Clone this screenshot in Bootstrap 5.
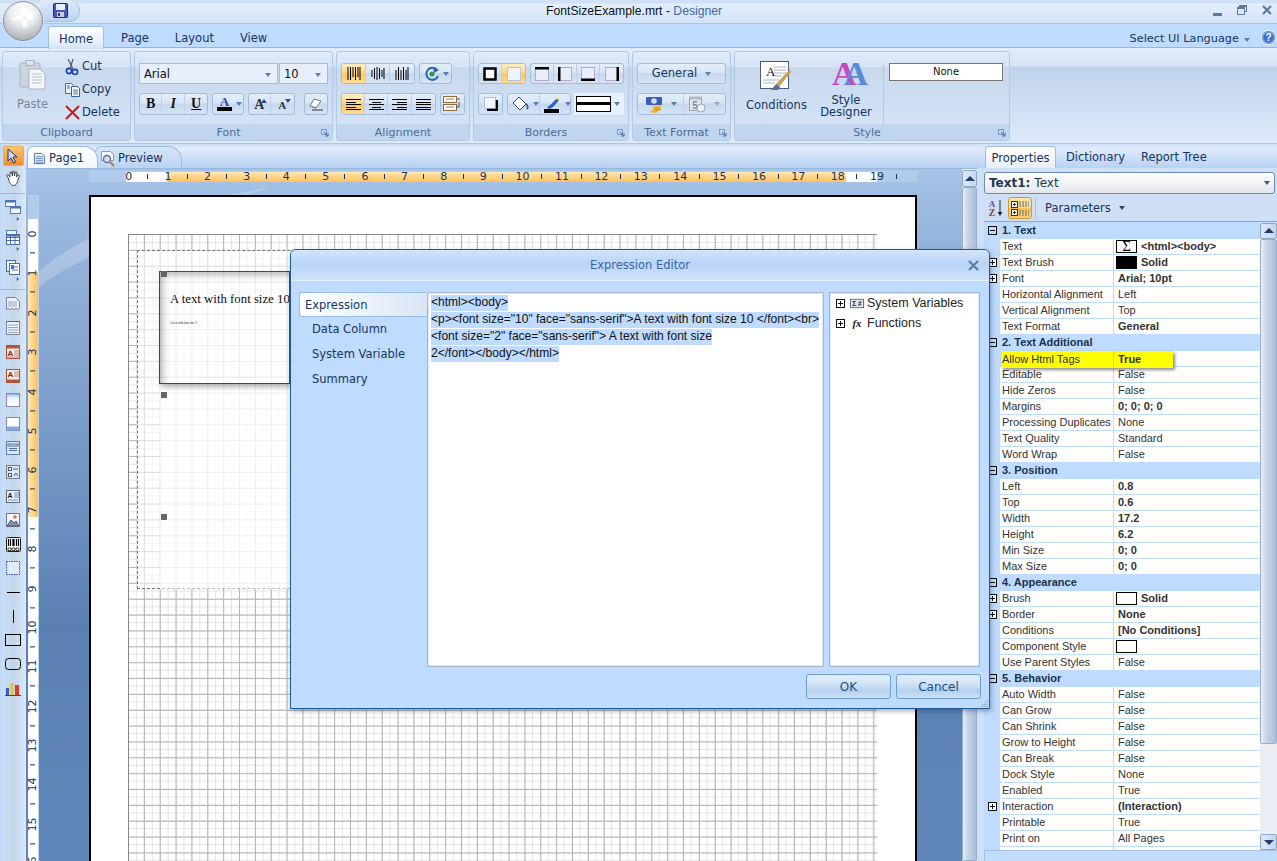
<!DOCTYPE html>
<html lang="en"><head><meta charset="utf-8"><title>FontSizeExample.mrt - Designer</title>
<link href="https://cdn.jsdelivr.net/npm/bootstrap@5.3.0/dist/css/bootstrap.min.css" rel="stylesheet">
<style>
html,body{margin:0;height:861px;width:1277px;overflow:hidden;background:#bfdbff}
body{position:relative;font:11px/1.2 "DejaVu Sans",sans-serif;color:#15365e}
svg{display:block;flex:none}
.tbar{height:24px;background:linear-gradient(#cfe0f7 0,#cfe0f7 3px,#e3eefc 4px,#d3e3f8 23px);border-bottom:1px solid #a5c6ea;align-items:flex-start}
.qat{margin-left:40px;width:40px;height:22px;background:linear-gradient(#dfeafa,#bcd3f0);border:1px solid #a9c2e2;border-left:0;border-top:0;border-radius:0 12px 12px 0;padding:3px 0 0 13px}
.ttl{position:relative;margin-left:466px;font:12.2px/22px "Liberation Sans",sans-serif;color:#111;white-space:pre}
.ttl b{font-weight:400;color:#3d69a8}
.wc{margin-left:auto;gap:15px;padding:5px 5px 0 0;align-items:flex-start}
.logo{position:absolute;left:3px;top:1px;width:40px;height:40px;border-radius:50%;border:1px solid #8b9199;background:radial-gradient(circle at 50% 25%,#fff 0,#e8ebef 40%,#a9aeb5 85%,#d6d9dd 100%);box-shadow:0 0 0 1px #d8e3f1;z-index:5}
.rtabs{height:24px;background:#bfdbff;border-bottom:1px solid #92b5df;padding:2px 0 0 48px;font-size:11.5px}
.rtabs .nav-link{padding:0;line-height:20px;color:#15365e;border:0}
.rtabs .on{width:56px;height:23px;text-align:center;background:linear-gradient(#fff,#e6effb 70%,#d3e2f5);border:1px solid #9bc3e6;border-bottom:0;border-radius:4px 4px 0 0;padding-top:2px;margin-right:17px;z-index:1}
.rtabs .t{margin-right:26px;padding-top:2px}
.rlang{margin-left:auto;padding:4px 1px 0 0;font-size:11.3px;gap:5px}
.rlang svg{margin-left:6px}
.rb{height:96px;background:linear-gradient(#e2ecfa,#d6e4f6 18px,#bfd3ec 19px,#d4e2f5 70px,#dce9f9);border-bottom:1px solid #a5c9ef;padding:3px 2px 2px;gap:3px}
.grp{border:1px solid #b3c9e4;border-radius:3px;background:linear-gradient(#e0eaf8,#d6e4f6 14px,#c8d9ee 16px,#d3e2f5 72px);display:flex;flex-direction:column;position:relative}
.gc{height:73px;padding:11px 4px 0;display:flex;flex-direction:column;gap:9px}
.gf{height:16px;background:#c1d6ee;text-align:center;line-height:17px;color:#4d6c95;font-size:11px;border-radius:0 0 3px 3px;margin-top:auto}
.gf.pr10{padding-right:10px}
.grip{position:absolute;right:3px;bottom:3px}
.rw{display:flex;gap:4px;height:22px;align-items:stretch}
.bg1{display:flex;border:1px solid #a3bcdb;border-radius:3px;background:linear-gradient(#e4eefb,#d8e5f6 45%,#c6d8ef 50%,#d6e4f6);overflow:hidden}
.bi{width:24px;display:flex;align-items:center;justify-content:center;border-right:1px solid #bdd0e8;font-family:"Liberation Serif",serif;color:#111;position:relative}
.bi:last-child{border-right:0}
.bi.on{background:linear-gradient(#ffeec2,#ffd98a 45%,#ffc564 55%,#ffdc94)}
.arr{width:0;height:0;border:3px solid transparent;border-top:4px solid #5a7dae;border-bottom:0;flex:none}
.cmb{background:#e6effb;border:1px solid #a3bcdb;display:flex;align-items:center;padding:2px 6px 0 4px;justify-content:space-between;font-size:11.5px;color:#111}
.sm{display:flex;align-items:center;gap:2px;height:23px;font-size:11.5px;color:#15365e}
.bt{position:absolute;text-align:center;line-height:12px;font-size:11.5px}
.ltb{width:26px;background:linear-gradient(90deg,#bcdafe 0,#c9dcf2 3px,#c2d6ec 14px,#dae7f6 25px);align-items:center;padding-top:2px}
.li{height:24px;display:flex;align-items:center;justify-content:center;flex:none}
.sep{height:1px;width:24px;background:#9fbcdc;margin:0;flex:none}
.doc{width:951px;background:linear-gradient(#c4d8f1 0,#a9c4e8 26px,#9dbae0 60px,#5a80b3 480px,#6087bb 100%);position:relative}
.dtabs{height:25px;padding:2px 0 0 1px;background:linear-gradient(#c9dcf6,#e3edfb 4px,#b6cff0);border-bottom:1px solid #97b7df;font-size:11.5px;align-items:flex-end}
.dt{height:22px;display:flex;align-items:center;gap:3px;padding:2px 0 0 5px;border-radius:6px 14px 0 0;border:1px solid #a0bde0;border-bottom:0}
.dt.a{width:71px;background:linear-gradient(#fff,#f2f6fc);z-index:1}
.dt.b{width:87px;margin-left:-3px;gap:1px;background:linear-gradient(#d8e6f8,#bcd3f1)}
.rh{margin:2px 0 0 63px;width:828px;height:11px;display:flex;padding-left:19px;border:1px solid #bcd1ec;border-width:1px 1px 0;line-height:10px;font-size:11px;background:linear-gradient(90deg,#b3cbea 36px,#fff 36px 77px,transparent 77px 756px,#fff 756px 787px,#b3cbea 787px),linear-gradient(#ffe8b4,#ffc05a)}
.rh span{width:39.4px;text-align:center;position:relative;flex:none}
.rh span::after{content:"";position:absolute;right:0;top:2px;height:5px;width:1px;background:#15365e}
.dm{margin-top:13px;flex:1;min-height:0;overflow:hidden}
.rv{width:11px;margin-left:2px;flex:none;border-right:1px solid #bcd1ec;padding-top:19px;background:linear-gradient(#b3cbea 24px,#fff 24px 77px,transparent 77px 322px,#fff 322px),linear-gradient(90deg,#ffe8b4,#ffc05a)}
.rv span{display:block;height:39.4px;width:10px;text-align:center;writing-mode:vertical-rl;transform:rotate(180deg);line-height:10px;position:relative}
.rv span::after{content:"";position:absolute;top:0;left:3px;width:5px;height:1px;background:#15365e}
.page{margin-left:50px;width:828px;background:#fff;border:2px solid #000;border-bottom:0;padding:37px 38px 0 37px;position:relative;flex:none;height:720px}
.sheet{position:relative;height:700px;border-left:1px solid #888;border-top:1px solid #888;background-color:#fff;background-image:linear-gradient(#b4b4b4 1px,transparent 1px),linear-gradient(90deg,#b4b4b4 1px,transparent 1px),linear-gradient(#e4e4e4 1px,transparent 1px),linear-gradient(90deg,#e4e4e4 1px,transparent 1px);background-size:15.87px 15.87px,15.87px 15.87px,7.93px 7.93px,7.93px 7.93px;background-position:0 -1px,-1px 0}
.margin{position:absolute;left:8px;top:15px;right:0;height:339px;border:1px dashed #777;border-right:0;background:rgba(255,255,255,.58)}
.comp{position:absolute;left:30px;top:36px;width:131px;height:113px;border:1px solid #e00;background:rgba(255,255,255,.45);box-shadow:2px 3px 5px rgba(0,0,0,.3),inset 7px 7px 7px -4px rgba(0,0,0,.28);font-family:"Liberation Serif",serif;color:#111;padding:20px 0 0 10px;white-space:nowrap;overflow:hidden;font-size:12.8px;line-height:15px}
.comp small{display:block;font-size:3px;line-height:3px;margin-top:15px}
.wash{position:absolute;left:31px;top:150px;right:0;height:204px;background:rgba(255,255,255,.5)}
.hd{position:absolute;left:32px;width:6px;height:6px;background:#666}
.vsb{width:15px;background:linear-gradient(90deg,#f4f7fb,#e6ebf3);flex:none;height:100%}
.sbb{height:17px;background:linear-gradient(90deg,#dfe9f6,#c6d6ea);border:1px solid #8fa7c8;border-radius:2px;display:flex;align-items:center;justify-content:center}
.sbt{background:linear-gradient(90deg,#e8eef7,#c5d3e6 40%,#a9bfd9 100%);border:1px solid #98afcc;border-radius:2px}
.up{width:0;height:0;border:5px solid transparent;border-top:0;border-bottom:5px solid #1f3f68}
.dn{width:0;height:0;border:5px solid transparent;border-bottom:0;border-top:5px solid #1f3f68}
.rp{width:300px;flex:none;background:#cfe0f6;padding-left:7px}
.ptabs{height:24px;padding-top:2px;gap:0;align-items:flex-end;font-size:11.5px;margin-left:-7px;padding-left:8px;background:linear-gradient(#cfe1f9,#dfeafb 5px,#b8d2f3)}
.ptabs .a{width:71px;height:22px;background:linear-gradient(#fff,#e9eff8);border:1px solid #a0bde0;border-bottom:0;border-radius:4px 4px 0 0;text-align:center;line-height:22px;margin-right:10px}
.ptabs span{height:22px;line-height:22px;margin-right:16px}
.pcmb{margin-top:4px;width:291px;height:22px;background:linear-gradient(#fff,#e3e6ea);border:1px solid #6a8bb4;border-radius:3px;padding:1px 4px 0;display:flex;align-items:center;font-size:12px;color:#22374f}
.pcmb b{margin-right:4px}
.ptb{height:27px;gap:5px;align-items:center;padding:2px 0 0 3px}
.pact{width:24px;height:22px;margin-left:-1px;border:1px solid #c79b45;border-radius:3px;background:linear-gradient(#ffe6a4,#ffd880 48%,#ffc250 52%,#ffcf72);display:flex;align-items:center;justify-content:center}
.pg{border-top:1px solid #a2a2a2;height:630px;overflow:hidden;background:#bfdbff;position:relative;padding-top:1px;display:flex}
.pgl{width:276px;flex:none;font:11px/15px "Liberation Sans",sans-serif;color:#333}
.ph{height:16px;display:flex;align-items:center;font-weight:700;color:#20324a;padding-left:0}
.ph span{margin-left:2px}
.pr{height:16px;display:flex}
.pm{width:16px;flex:none;display:flex;align-items:center;justify-content:center;padding-left:0}
.pl{width:114px;background:#fff;padding-left:2px;border-right:1px solid #bfdbff;border-bottom:1px solid #bfdbff;flex:none;white-space:nowrap}
.pv{width:146px;background:#fff;padding-left:4px;border-bottom:1px solid #bfdbff;flex:none;white-space:nowrap;overflow:hidden;display:flex;align-items:center;gap:4px}
.hl{display:flex;width:173px;height:17px;margin:0 0 -1px 1px;background:#ff0;box-shadow:2px 2px 3px rgba(0,0,0,.45);position:relative;z-index:2;line-height:16px;color:#333}
.sw{width:21px;height:13px;border:1px solid #000;flex:none;display:flex;align-items:center;justify-content:center;font:15px/1 "Liberation Serif",serif;color:#000;margin-left:-2px}
.psb{width:17px;display:flex;flex-direction:column;background:#ebeff5;flex:none}
.pend{margin-top:0;height:11px;background:#c2dcfc;border-left:1px solid #a7c0dd;border-top:1px solid #a7c0dd}
.dlg{position:absolute;left:290px;top:249px;width:700px;height:460px;border:1px solid #1f5c98;border-radius:6px 6px 0 0;background:#bfdbff;box-shadow:1px 2px 5px rgba(20,40,80,.4);z-index:10;display:flex;flex-direction:column}
.dh{height:31px;background:linear-gradient(#d4e4f9,#b9d5f8 45%,#cfe1f9);border-bottom:1px solid #e5f0fd;text-align:center;font-size:11.5px;line-height:30px;color:#3c64a0;position:relative;flex:none;border-radius:5px 5px 0 0}
.dh svg{position:absolute;right:10px;top:10px}
.dtb{width:136px;padding:0 0 0 8px;flex:none;font-size:11.5px}
.dtb div{height:25px;line-height:24px;padding-left:13px}
.dtb .a{padding-left:5px;border:1px solid #99bfe8;border-right:0;border-radius:3px 0 0 3px;background:linear-gradient(90deg,#fff,#d9e6f6);margin-bottom:0}
.dbd{flex:1;min-height:0;padding-top:11px}
.ed{width:397px;background:#fff;border:1px solid #a6b7c9;box-shadow:inset 0 0 0 1px #dfe9f5;font:12.05px/17px "Liberation Sans",sans-serif;color:#111;padding:1px 3px;white-space:nowrap;border-radius:3px 0 0 0}
.ed span{background:#bfdbff;display:inline-block;height:16px;line-height:15px}
.ed div{height:17px}
.tr{width:151px;margin-left:5px;background:#fff;border:1px solid #a6b7c9;box-shadow:inset 0 0 0 1px #dfe9f5;font:12.5px/20px "Liberation Sans",sans-serif;color:#222}
.tr div{display:flex;align-items:center;height:20px;gap:3px;padding-left:6px}
.df{height:41px;display:flex;justify-content:flex-end;gap:5px;padding:7px 8px 0 0;flex:none;position:relative}
.df>svg{position:absolute;right:1px;bottom:1px}
.dbtn{width:85px;height:25px;padding:0;font:12px/22px "DejaVu Sans",sans-serif;color:#1b4f82;border:1px solid #6f9dca;border-radius:3px;background:linear-gradient(#e3eefc,#d1e2f6 40%,#b5d0ec 70%,#cfe2f7)}
</style></head>
<body>
<svg width="0" height="0" class="position-absolute">
<symbol id="pb" viewBox="0 0 9 9"><rect x=".5" y=".5" width="8" height="8" fill="#fff" stroke="#111"/><path d="M2 4.5h5M4.5 2v5" stroke="#111"/></symbol>
<symbol id="mb" viewBox="0 0 9 9"><rect x=".5" y=".5" width="8" height="8" fill="none" stroke="#111"/><path d="M2 4.5h5" stroke="#111"/></symbol>
<symbol id="grip" viewBox="0 0 8 8"><rect x=".5" y=".5" width="5" height="5" fill="none" stroke="#7b9cc6"/><path d="M3 3l4 4M7 4v3H4" fill="none" stroke="#3e6ea8"/></symbol>
<symbol id="doc" viewBox="0 0 14 14"><path d="M1.5 1.5h8l3 3v8h-11z" fill="#e9eef6" stroke="#5a6c88"/><path d="M3 5h8M3 7h8M3 9h8M3 11h8" stroke="#6b8cc0"/></symbol>
<symbol id="ar" viewBox="0 0 6 6"><path d="M1 0l4 3-4 3z" fill="#3d6ba5"/></symbol>
</svg>
<div class="logo"><svg width="38" height="38" viewBox="0 0 38 38"><path d="M6 18h20l4-2-1-4-6-5-4 1 4 2-14 6zM18 14l5 1v10h-4z" fill="#fff"/><path d="M28 4v18M20 11h14" stroke="#fff" stroke-width=".7" opacity=".8"/></svg></div>
<div class="tbar d-flex">
 <div class="qat"><svg width="15" height="15" viewBox="0 0 15 15"><rect x=".5" y=".5" width="14" height="14" rx="1" fill="#4657b8" stroke="#222a78"/><rect x="3" y="1" width="9" height="6" fill="#e8eefc"/><rect x="4" y="9" width="7" height="5" fill="#c9cdd8"/><rect x="5" y="10" width="2" height="3" fill="#333a70"/></svg></div>
 <div class="ttl">FontSizeExample.mrt - <b>Designer</b></div>
 <div class="wc d-flex">
  <svg width="9" height="14" viewBox="0 0 9 14"><rect y="8" width="9" height="3" fill="#5c7a9f"/></svg>
  <svg width="10" height="10" viewBox="0 0 10 10"><path d="M2.5 2.5v-2h7v6h-2" fill="none" stroke="#5c7a9f"/><path d="M.5 2.5h7v7h-7z" fill="none" stroke="#5c7a9f"/><path d="M0 2h8v2H0zM2 0h8v2H2z" fill="#5c7a9f"/></svg>
  <svg width="10" height="10" viewBox="0 0 10 10"><path d="M1 1l8 8M9 1l-8 8" stroke="#5c7a9f" stroke-width="2.2"/></svg>
 </div>
</div>
<div class="rtabs d-flex">
 <ul class="nav"><li class="nav-link on">Home</li><li class="nav-link t">Page</li><li class="nav-link t">Layout</li><li class="nav-link t">View</li></ul>
 <div class="rlang d-flex align-items-start"><span style="line-height:16px;margin-top:1px">Select UI Language</span><i class="arr mt-2"></i>
 <svg width="15" height="15" viewBox="0 0 15 15"><circle cx="7.5" cy="7.5" r="7" fill="#3c6fd0" stroke="#fff"/><circle cx="7.5" cy="7.5" r="5.6" fill="none" stroke="#8fb4ef"/><text x="7.5" y="11" font-size="10" font-weight="700" fill="#fff" text-anchor="middle" font-family="Liberation Sans">?</text></svg></div>
</div>
<div class="rb d-flex">
 <div class="grp" style="width:129px">
  <div class="gc position-relative d-block">
   <svg class="position-absolute" style="left:16px;top:8px" width="27" height="30" viewBox="0 0 27 30"><rect x="1" y="3" width="20" height="24" rx="1" fill="#ccd4e0" stroke="#a8b2c0"/><rect x="7" y="0.5" width="8" height="5" fill="#dee3ea" stroke="#a8b2c0"/><path d="M10 9h11l5 5v15H10z" fill="#f4f6fa" stroke="#aab4c2"/><path d="M13 14h9M13 17h10M13 20h10M13 23h10" stroke="#b7c0cd"/></svg>
   <div class="position-absolute text-center" style="left:12px;top:46px;width:35px;color:#7a8793;font-size:11.5px">Paste</div>
   <div class="position-absolute" style="left:62px;top:3px">
    <div class="sm"><svg width="15" height="16" viewBox="0 0 15 16"><path d="M3 0l5 10M8 0L5 10" stroke="#555" stroke-width="1.2"/><circle cx="4" cy="12" r="2.6" fill="none" stroke="#1c3fa8" stroke-width="1.6"/><circle cx="10" cy="13" r="2.6" fill="none" stroke="#1c3fa8" stroke-width="1.6"/></svg>Cut</div>
    <div class="sm"><svg width="15" height="15" viewBox="0 0 15 15"><path d="M.5 1.5h6l2 2v8h-8z" fill="#eef2f9" stroke="#4a6fa8"/><path d="M6.5 4.5h6l2 2v8h-8z" fill="#fff" stroke="#2f5ea8"/><path d="M8 8h5M8 10h5M8 12h5M2 4h3M2 6h3" stroke="#4a6fa8"/></svg>Copy</div>
    <div class="sm"><svg width="15" height="15" viewBox="0 0 15 15"><path d="M1 1l13 13M14 1L1 14" stroke="#d31414" stroke-width="2"/></svg>Delete</div>
   </div>
  </div>
  <div class="gf">Clipboard</div>
 </div>
 <div class="grp" style="width:199px">
  <div class="gc">
   <div class="rw" style="gap:1px;height:21px"><div class="cmb" style="width:139px">Arial<i class="arr"></i></div><div class="cmb" style="width:49px">10<i class="arr"></i></div></div>
   <div class="rw">
    <div class="bg1"><div class="bi fw-bold" style="font-size:14px">B</div><div class="bi fw-bold fst-italic" style="font-size:14px">I</div><div class="bi fw-bold text-decoration-underline" style="font-size:14px">U</div></div>
    <div class="bg1" style="width:33px;align-items:center;gap:3px;padding-left:3px"><svg width="17" height="18" viewBox="0 0 17 18"><text x="8.5" y="11" font-size="13" font-weight="700" fill="#2a4aa0" text-anchor="middle" font-family="Liberation Serif">A</text><rect x="1" y="12" width="15" height="4" fill="#000"/></svg><i class="arr"></i></div>
    <div class="bg1"><div class="bi fw-bold" style="font-size:14px;padding-top:2px;color:#333">A<i class="arr position-absolute" style="top:5px;right:3px;transform:rotate(180deg);border-top-color:#2a4aa0"></i></div><div class="bi fw-bold" style="font-size:11px;padding-top:4px;color:#333">A<i class="arr position-absolute" style="top:5px;right:3px;border-top-color:#2a4aa0"></i></div></div>
    <div class="bg1 ms-1" style="margin-left:5px!important"><div class="bi"><svg width="16" height="13" viewBox="0 0 16 13"><path d="M6 1l7 2-5 7-6-2z" fill="#fff" stroke="#777"/><path d="M2 8l6 2" stroke="#777"/><path d="M4 12h11" stroke="#333"/></svg></div></div>
   </div>
  </div>
  <div class="gf pr10">Font</div><svg class="grip" width="8" height="8"><use href="#grip"/></svg>
 </div>
 <div class="grp" style="width:134px">
  <div class="gc">
   <div class="rw" style="height:21px">
    <div class="bg1"><div class="bi on"><svg width="14" height="13"><path d="M1 0v13M3.500 0v13M6 0v10M8.500 0v13M11 0v10M13 0v13" stroke="#000"/></svg></div><div class="bi"><svg width="14" height="13"><path d="M1 3v7M3.500 1v11M6 0v13M8.500 1v11M11 3v7M13 1v11" stroke="#000"/></svg></div><div class="bi"><svg width="14" height="13"><path d="M1 3v10M3.500 0v13M6 3v10M8.500 0v13M11 3v10M13 0v13" stroke="#000"/></svg></div></div>
    <div class="bg1" style="width:33px;align-items:center;gap:3px;padding-left:4px"><svg width="16" height="16" viewBox="0 0 16 16"><path d="M13 4a6 6 0 1 0 1 6" fill="none" stroke="#2f61a8" stroke-width="2"/><path d="M9 1l6 3-5 3z" fill="#2f61a8"/><circle cx="8" cy="8" r="2.500" fill="#25a04a"/></svg><i class="arr"></i></div>
   </div>
   <div class="rw">
    <div class="bg1"><div class="bi on"><svg width="15" height="11"><path d="M0 .5h15M0 3.500h10M0 5.500h15M0 8.500h10M0 10.500h15" stroke="#000"/></svg></div><div class="bi"><svg width="15" height="11"><path d="M0 .5h15M3 3.500h9M0 5.500h15M3 8.500h9M0 10.500h15" stroke="#000"/></svg></div><div class="bi"><svg width="15" height="11"><path d="M0 .5h15M5 3.500h10M0 5.500h15M5 8.500h10M0 10.500h15" stroke="#000"/></svg></div><div class="bi"><svg width="15" height="11"><path d="M0 .5h15M0 3.500h15M0 5.500h15M0 8.500h15M0 10.500h15" stroke="#000"/></svg></div></div>
    <div class="bg1"><div class="bi"><svg width="18" height="16" viewBox="0 0 18 16"><rect x=".5" y=".5" width="13" height="6" fill="#fff" stroke="#8a6a40"/><rect x=".5" y="8.500" width="13" height="6" fill="#fff" stroke="#8a6a40"/><path d="M3 3h8M3 11h8" stroke="#b47b3a"/><path d="M14 3h3M16 6v5l-3 0" fill="none" stroke="#555"/></svg></div></div>
   </div>
  </div>
  <div class="gf">Alignment</div>
 </div>
 <div class="grp" style="width:156px">
  <div class="gc">
   <div class="rw" style="height:21px">
    <div class="bg1"><div class="bi"><svg width="14" height="14"><rect x="1.500" y="1.500" width="11" height="11" fill="#fff" stroke="#000" stroke-width="2.500"/></svg></div><div class="bi on"><svg width="14" height="14"><rect x=".5" y=".5" width="13" height="13" fill="#eef2fa" stroke="#b9c4e0"/></svg></div></div>
    <div class="bg1"><div class="bi"><svg width="14" height="14"><rect x=".5" y=".5" width="13" height="13" fill="#e9eef9" stroke="#b6a8c8"/><rect width="14" height="2.500"/></svg></div><div class="bi"><svg width="14" height="14"><rect x=".5" y=".5" width="13" height="13" fill="#e9eef9" stroke="#b6a8c8"/><rect width="2.500" height="14"/></svg></div><div class="bi"><svg width="14" height="14"><rect x=".5" y=".5" width="13" height="13" fill="#e9eef9" stroke="#b6a8c8"/><rect y="11.500" width="14" height="2.500"/></svg></div><div class="bi"><svg width="14" height="14"><rect x=".5" y=".5" width="13" height="13" fill="#e9eef9" stroke="#b6a8c8"/><rect x="11.500" width="2.500" height="14"/></svg></div></div>
   </div>
   <div class="rw">
    <div class="bg1"><div class="bi"><svg width="14" height="14"><rect x=".5" y=".5" width="11" height="11" fill="#f2f5fb" stroke="#b6c2da"/><path d="M13 3v10H3" fill="none" stroke="#000" stroke-width="2.500"/></svg></div></div>
    <div class="bg1" style="width:65px"><div class="d-flex align-items-center gap-1 ps-1" style="width:33px;border-right:1px solid #bdd0e8"><svg width="17" height="16" viewBox="0 0 17 16"><path d="M7 1l7 7-6 6-7-7z" fill="#fff" stroke="#3d4f6e"/><path d="M14 8c2 2 2 4 1 5" fill="none" stroke="#2a61b0" stroke-width="1.800"/></svg><i class="arr"></i></div><div class="d-flex align-items-center gap-1 ps-1"><svg width="17" height="17" viewBox="0 0 17 17"><path d="M3 11c3-1 6-5 10-9l2 2c-3 4-6 8-10 9z" fill="#2f61c0"/><path d="M12 3l1-2 2 2-2 1" fill="#ffcd4a"/><rect y="13" width="15" height="4"/></svg><i class="arr"></i></div></div>
    <div class="d-flex align-items-center" style="width:51px;background:#e6effb;margin-left:-1px;padding:0 4px 0 2px;justify-content:space-between"><svg width="35" height="16"><rect x=".5" y=".5" width="34" height="15" fill="#fff" stroke="#000"/><rect y="6" width="35" height="3"/></svg><i class="arr"></i></div>
   </div>
  </div>
  <div class="gf pr10">Borders</div><svg class="grip" width="8" height="8"><use href="#grip"/></svg>
 </div>
 <div class="grp" style="width:99px">
  <div class="gc">
   <div class="rw" style="height:21px"><div class="bg1 w-100 align-items-center justify-content-center gap-2" style="font-size:11.5px;padding-top:1px">General<i class="arr"></i></div></div>
   <div class="rw"><div class="bg1 w-100 align-items-center ps-2" ><svg width="17" height="17" viewBox="0 0 17 17"><rect x="0" y="1" width="16" height="8" rx="1" fill="#3a5eb8"/><circle cx="8" cy="5" r="2.800" fill="#cfe0f8"/><ellipse cx="11" cy="11" rx="4" ry="1.400" fill="#f0b428"/><ellipse cx="11" cy="13.500" rx="4" ry="1.400" fill="#e09c18"/><ellipse cx="8" cy="15.500" rx="4" ry="1.300" fill="#f0b428"/></svg><i class="arr ms-2"></i><span style="width:1px;height:22px;background:#bdd0e8;margin:0 5px 0 6px"></span><svg width="17" height="17" viewBox="0 0 17 17"><rect x=".5" y="1.500" width="12" height="13" fill="#e4e8ee" stroke="#9aa5b3"/><rect x=".5" y=".5" width="12" height="3" fill="#b4bcc8"/><text x="6" y="13" font-size="10" font-weight="700" fill="#7f8a99" text-anchor="middle" font-family="Liberation Sans">5</text><circle cx="12" cy="12" r="4" fill="#eef1f5" stroke="#9aa5b3"/></svg><i class="arr ms-2" style="border-top-color:#9aa9bd"></i></div></div>
  </div>
  <div class="gf pr10">Text Format</div><svg class="grip" width="8" height="8"><use href="#grip"/></svg>
 </div>
 <div class="grp" style="width:276px">
  <div class="gc position-relative d-block" style="padding:0">
   <svg class="position-absolute" style="left:25px;top:9px" width="32" height="30" viewBox="0 0 32 30"><rect x=".5" y=".5" width="28" height="27" fill="#fff" stroke="#4c5b72"/><text x="6" y="15" font-size="13" font-family="Liberation Serif" fill="#111">A</text><path d="M14 6h12M14 9h12M14 12h12M14 15h8M3 19h16M3 22h12" stroke="#a9b4c8"/><path d="M30 8L16 23l3 3L31 11z" fill="#c9a35a"/><path d="M16 23l-5 6h7l2-3z" fill="#5f6f93"/></svg>
   <div class="bt" style="left:11px;top:47px;width:60px">Conditions</div>
   <div class="position-absolute" style="left:97px;top:5px;font:700 34px/34px 'Liberation Serif',serif;letter-spacing:-13px;white-space:nowrap"><span style="color:#c24bc4">A</span><span style="color:#5a8ad8">A</span></div>
   <div class="bt" style="left:81px;top:42px;width:60px">Style<br>Designer</div>
   <div class="position-absolute" style="left:148px;top:12px;width:1px;height:62px;background:#b3c9e4"></div>
   <div class="position-absolute text-center" style="left:154px;top:11px;width:114px;height:18px;border:1px solid #777;background:#fff;color:#111;font:10px/16px 'DejaVu Sans',sans-serif">None</div>
  </div>
  <div class="gf pr10">Style</div><svg class="grip" width="8" height="8"><use href="#grip"/></svg>
 </div>
</div>
<div class="d-flex" style="height:717px;overflow:hidden">
 <div class="ltb d-flex flex-column">
  <div class="li" style="width:21px;height:20px;background:linear-gradient(#ffc46e,#f08c2c);border:1px solid #e6b34e;border-radius:2px"><svg width="12" height="16" viewBox="0 0 12 16"><path d="M1 1v12l3-3 2.500 5 2-1-2.500-5h4z" fill="#c8dcfa" stroke="#1d3460"/></svg></div>
  <div class="li" style="height:26px;padding-bottom:2px"><svg width="17" height="17" viewBox="0 0 17 17"><path d="M4 9L1.500 5.500 3 4.500 5 7V2.500L6.500 2 7.500 6V1.500L9 1.500l.5 4.500.8-4L12 2.500l-.5 4.500 1.500-2.500 1.500 1-2 6c-1 3-2 4-4 4-3 0-4-3-5-6.500z" fill="#fff" stroke="#444"/></svg></div>
  <div style="height:1px;flex:none"></div><div class="sep"></div>
  <div class="li" style="height:22px;padding-top:4px"><svg width="16" height="14" viewBox="0 0 16 14"><rect x=".5" y=".5" width="10" height="6" fill="#f2f6fc" stroke="#5a7db0"/><rect x=".5" y=".5" width="10" height="2" fill="#3f74c8"/><rect x="5.500" y="6.500" width="10" height="7" fill="#f2f6fc" stroke="#5a7db0"/><rect x="5.500" y="6.500" width="10" height="2" fill="#3f74c8"/></svg></div>
  <div class="li" style="height:6px;padding-left:10px"><svg width="4" height="6"><use href="#ar"/></svg></div>
  <div class="li" style="padding-top:6px"><svg width="14" height="15" viewBox="0 0 14 15"><rect x=".5" y=".5" width="10" height="6" fill="#f2f6fc" stroke="#5a7db0"/><rect x=".5" y="4.500" width="13" height="10" fill="#fff" stroke="#4a6fa8"/><path d="M.5 7.500h13M.5 10.500h13M4.500 5v9M9 5v9" stroke="#4a6fa8"/><rect x=".5" y="4.500" width="13" height="2" fill="#3f74c8"/></svg></div>
  <div class="li" style="height:6px;padding-left:10px"><svg width="4" height="6"><use href="#ar"/></svg></div>
  <div class="li" style="padding-top:6px"><svg width="14" height="15" viewBox="0 0 14 15"><rect x=".5" y=".5" width="9" height="11" fill="#e9eef8" stroke="#4a6fa8"/><rect x="3.500" y="3.500" width="10" height="11" fill="#fff" stroke="#4a6fa8"/><path d="M6 7h6M6 10h6" stroke="#4a6fa8"/><rect x="5" y="5" width="3" height="4" fill="#3f74c8"/></svg></div>
  <div class="li" style="height:6px;padding-left:10px"><svg width="4" height="6"><use href="#ar"/></svg></div>
  <div style="height:7px;flex:none"></div><div class="sep"></div>
  <div style="height:2px;flex:none"></div>
  <div class="li"><svg width="14" height="14" viewBox="0 0 14 14"><path d="M.5.5h9l4 4v7l-1.500 1-2-1-2 1-2-1-2 1-2-1-1.500 1z" fill="#eef2f8" stroke="#78839a"/><path d="M2 5h9M2 7h9M2 9h9" stroke="#9aa6bb"/></svg></div>
  <div class="li"><svg width="14" height="14" viewBox="0 0 14 14"><path d="M.5.5h13v13H.5z" fill="#eef2f8" stroke="#78839a"/><path d="M.5.5h13" stroke="#445" stroke-dasharray="1 1"/><path d="M2 4h10M2 6.500h10M2 9h10M2 11.500h10" stroke="#9aa6bb"/></svg></div>
  <div class="li"><svg width="14" height="14" viewBox="0 0 14 14"><rect x=".5" y=".5" width="13" height="13" fill="#fbeae0" stroke="#a8503c"/><rect x=".5" y=".5" width="13" height="3" fill="#b4553c"/><text x="4.500" y="11" font-size="8" font-weight="700" fill="#7a2a1c" text-anchor="middle" font-family="Liberation Sans">A</text><path d="M8 6h5M8 8h5M8 10h5M1 12h12" stroke="#c08878"/></svg></div>
  <div class="li"><svg width="14" height="14" viewBox="0 0 14 14"><rect x=".5" y=".5" width="13" height="13" fill="#fbeae0" stroke="#a8503c"/><rect x=".5" y="10.500" width="13" height="3" fill="#b4553c"/><text x="4.500" y="8" font-size="8" font-weight="700" fill="#7a2a1c" text-anchor="middle" font-family="Liberation Sans">A</text><path d="M8 3h5M8 5h5M8 7h5" stroke="#c08878"/></svg></div>
  <div class="li"><svg width="14" height="14" viewBox="0 0 14 14"><defs><linearGradient id="gb" x2="0" y2="1"><stop stop-color="#7ea8e6"/><stop offset=".3" stop-color="#eaf0fa"/><stop offset="1" stop-color="#fff"/></linearGradient></defs><rect x=".5" y=".5" width="13" height="13" fill="url(#gb)" stroke="#88a"/></svg></div>
  <div class="li"><svg width="14" height="14" viewBox="0 0 14 14"><rect x=".5" y=".5" width="13" height="13" fill="#fff" stroke="#88a"/><rect x=".5" y="9.500" width="13" height="4" fill="#7ea8e6"/></svg></div>
  <div class="li"><svg width="14" height="14" viewBox="0 0 14 14"><rect x=".5" y=".5" width="13" height="13" fill="#dfe8f6" stroke="#5a7db0"/><rect x="2" y="3" width="10" height="2" fill="none" stroke="#4a6fa8"/><path d="M3 7.500h8M3 9.500h8" stroke="#4a6fa8"/></svg></div>
  <div class="li"><svg width="14" height="14" viewBox="0 0 14 14"><rect x=".5" y=".5" width="13" height="13" fill="#dfe8f6" stroke="#6a7a90"/><rect x="2.500" y="2.500" width="3" height="3" fill="#fff" stroke="#555"/><path d="M7 4h5" stroke="#555"/><rect x="2.500" y="8.500" width="3" height="3" fill="#fff" stroke="#555"/><path d="M8 11l2-3 2 3" fill="none" stroke="#2f61a8"/></svg></div>
  <div class="li"><svg width="14" height="13" viewBox="0 0 14 13"><rect x=".5" y=".5" width="13" height="12" fill="#eef2f8" stroke="#5a6c88"/><text x="4" y="8" font-size="7" font-weight="700" fill="#111" text-anchor="middle" font-family="Liberation Sans">A</text><path d="M8 3h5M8 5h5M8 7h5M2 10h10" stroke="#7a8aa5"/></svg></div>
  <div class="li"><svg width="14" height="14" viewBox="0 0 14 14"><rect x=".5" y=".5" width="13" height="13" fill="#f3f5fa" stroke="#6a7a90"/><path d="M1 13l4-6 3 3 2-2 3 5z" fill="#8094b4" stroke="#556"/><circle cx="9" cy="4" r="1.800" fill="#e8762c"/></svg></div>
  <div class="li"><svg width="15" height="15" viewBox="0 0 15 15"><rect x=".5" y=".5" width="14" height="14" rx="1" fill="#fff" stroke="#222"/><path d="M2.500 2v7M4.500 2v7M7 2v7M8 2v7M10.500 2v7M12.500 2v7" stroke="#000" stroke-width="1.200"/><path d="M2 11h3v2.500H2zM6 11h3v2.500H6zM10 11h3v2.500h-3z" fill="none" stroke="#000" stroke-width=".7"/></svg></div>
  <div class="li"><svg width="14" height="14" viewBox="0 0 14 14"><rect x=".5" y=".5" width="13" height="13" fill="#e3ebf8" stroke="#2a4fd0" stroke-dasharray="1.500 1"/></svg></div>
  <div class="li"><svg width="13" height="3"><rect y="1" width="13" height="1" fill="#000"/></svg></div>
  <div class="li"><svg width="3" height="13"><rect x="1" width="1" height="13" fill="#000"/></svg></div>
  <div class="li"><svg width="16" height="12"><rect x=".5" y=".5" width="15" height="11" fill="none" stroke="#000"/></svg></div>
  <div class="li"><svg width="16" height="12"><rect x=".5" y=".5" width="15" height="11" rx="3" fill="none" stroke="#000"/></svg></div>
  <div class="li"><svg width="16" height="15" viewBox="0 0 16 15"><rect x="1" y="7" width="3" height="7" fill="#2f61c0"/><rect x="5.500" y="2" width="3" height="12" fill="#f0c420"/><rect x="10" y="4" width="4" height="10" fill="#d2402a"/><path d="M0 14.500h16" stroke="#445"/></svg></div>
 </div>
 <div class="doc d-flex flex-column">
  <svg class="position-absolute" style="left:12px;top:44px;pointer-events:none" width="230" height="100" viewBox="0 0 230 100"><path d="M0 85C40 45 130 15 230 0 160 25 50 60 0 100z" fill="#fff" opacity=".22"/></svg>
  <div class="dtabs d-flex"><div class="dt a"><svg width="13" height="15"><use href="#doc"/></svg>Page1</div><div class="dt b"><svg width="16" height="16" viewBox="0 0 16 16"><path d="M.5.5h9l3 3v6h-12z" fill="#f2f5fa" stroke="#8898b0"/><circle cx="6" cy="8" r="3.500" fill="#cfe0f6" stroke="#5a6c88" stroke-width="1.300"/><path d="M9 11l4 4" stroke="#c07a20" stroke-width="2"/></svg>Preview</div></div>
  <div class="d-flex flex-grow-1" style="min-height:0">
   <div class="flex-grow-1 position-relative" style="min-width:0">
    <div class="rh"><span>0</span><span>1</span><span>2</span><span>3</span><span>4</span><span>5</span><span>6</span><span>7</span><span>8</span><span>9</span><span>10</span><span>11</span><span>12</span><span>13</span><span>14</span><span>15</span><span>16</span><span>17</span><span>18</span><span>19</span></div>
    <div class="dm d-flex">
     <div class="rv"><span>0</span><span>1</span><span>2</span><span>3</span><span>4</span><span>5</span><span>6</span><span>7</span><span>8</span><span>9</span><span>10</span><span>11</span><span>12</span><span>13</span><span>14</span><span>15</span><span>16</span></div>
     <div class="page">
      <div class="sheet">
       <div class="margin"></div>
       <div class="wash"></div>
       <div class="comp">A text with font size 10<small>A text with font size 2</small></div>
       <div class="hd" style="top:36px"></div>
       <div class="hd" style="top:157px"></div>
       <div class="hd" style="top:279px"></div>
      </div>
     </div>
    </div>
   </div>
   <div class="vsb d-flex flex-column">
    <div class="sbb" style="margin-top:1px"><i class="up"></i></div>
    <div class="sbt flex-grow-1"></div>
   </div>
  </div>
 </div>
 <div class="rp d-flex flex-column">
  <div class="ptabs d-flex"><div class="a">Properties</div><span>Dictionary</span><span>Report Tree</span></div>
  <div class="pcmb"><b>Text1:</b>Text<i class="arr ms-auto" style="border-top-color:#2a5a9a"></i></div>
  <div class="ptb d-flex"><svg width="17" height="19" viewBox="0 0 17 19"><text x="5" y="8" font-size="9" font-weight="700" fill="#5a4aa0" text-anchor="middle" font-family="Liberation Serif">A</text><text x="5" y="17" font-size="10" font-weight="700" fill="#a03a30" text-anchor="middle" font-family="Liberation Serif">Z</text><path d="M13 1v13" stroke="#222"/><path d="M10.500 13h5l-2.500 4z" fill="#222"/></svg>
   <div class="pact"><svg width="18" height="17" viewBox="0 0 18 17"><rect x=".5" y="1.500" width="6" height="6" fill="#fff" stroke="#334"/><path d="M2 4.500h3M3.500 3v3" stroke="#334"/><rect x=".5" y="9.500" width="6" height="6" fill="#fff" stroke="#334"/><path d="M2 12.500h3M3.500 11v3" stroke="#334"/><path d="M8 2h10M8 4h10M8 6h10M8 11h10M8 13h10M8 15h10" stroke="#5a6a86" stroke-dasharray="2 1"/></svg></div>
   <span style="width:1px;height:22px;background:#a8c0df;margin:0 4px 0 -2px"></span><span class="d-flex align-items-center gap-2" style="font-size:11.5px">Parameters<i class="arr" style="border-top-color:#2a4a70"></i></span></div>
  <div class="pg">
   <div class="pgl">
    <div class="ph"><div class="pm"><svg width="9" height="9"><use href="#mb"/></svg></div><span>1. Text</span></div>
    <div class="pr"><div class="pm"></div><div class="pl">Text</div><div class="pv"><i class="sw">Σ</i><b>&lt;html&gt;&lt;body&gt;</b></div></div>
    <div class="pr"><div class="pm"><svg width="9" height="9"><use href="#pb"/></svg></div><div class="pl">Text Brush</div><div class="pv"><i class="sw" style="background:#000"></i><b>Solid</b></div></div>
    <div class="pr"><div class="pm"><svg width="9" height="9"><use href="#pb"/></svg></div><div class="pl">Font</div><div class="pv"><b>Arial; 10pt</b></div></div>
    <div class="pr"><div class="pm"></div><div class="pl">Horizontal Alignment</div><div class="pv">Left</div></div>
    <div class="pr"><div class="pm"></div><div class="pl">Vertical Alignment</div><div class="pv">Top</div></div>
    <div class="pr"><div class="pm"></div><div class="pl">Text Format</div><div class="pv"><b>General</b></div></div>
    <div class="ph"><div class="pm"><svg width="9" height="9"><use href="#mb"/></svg></div><span>2. Text Additional</span></div>
    <div class="pr"><div class="pm"></div><div class="hl"><div style="width:113px;padding-left:1px;border-right:1px solid #c8d85a">Allow Html Tags</div><div class="fw-bold ps-1">True</div></div><div class="pv" style="width:87px"></div></div>
    <div class="pr"><div class="pm"></div><div class="pl">Editable</div><div class="pv">False</div></div>
    <div class="pr"><div class="pm"></div><div class="pl">Hide Zeros</div><div class="pv">False</div></div>
    <div class="pr"><div class="pm"></div><div class="pl">Margins</div><div class="pv"><b>0; 0; 0; 0</b></div></div>
    <div class="pr"><div class="pm"></div><div class="pl">Processing Duplicates</div><div class="pv">None</div></div>
    <div class="pr"><div class="pm"></div><div class="pl">Text Quality</div><div class="pv">Standard</div></div>
    <div class="pr"><div class="pm"></div><div class="pl">Word Wrap</div><div class="pv">False</div></div>
    <div class="ph"><div class="pm"><svg width="9" height="9"><use href="#mb"/></svg></div><span>3. Position</span></div>
    <div class="pr"><div class="pm"></div><div class="pl">Left</div><div class="pv"><b>0.8</b></div></div>
    <div class="pr"><div class="pm"></div><div class="pl">Top</div><div class="pv"><b>0.6</b></div></div>
    <div class="pr"><div class="pm"></div><div class="pl">Width</div><div class="pv"><b>17.2</b></div></div>
    <div class="pr"><div class="pm"></div><div class="pl">Height</div><div class="pv"><b>6.2</b></div></div>
    <div class="pr"><div class="pm"></div><div class="pl">Min Size</div><div class="pv"><b>0; 0</b></div></div>
    <div class="pr"><div class="pm"></div><div class="pl">Max Size</div><div class="pv"><b>0; 0</b></div></div>
    <div class="ph"><div class="pm"><svg width="9" height="9"><use href="#mb"/></svg></div><span>4. Appearance</span></div>
    <div class="pr"><div class="pm"><svg width="9" height="9"><use href="#pb"/></svg></div><div class="pl">Brush</div><div class="pv"><i class="sw"></i><b>Solid</b></div></div>
    <div class="pr"><div class="pm"><svg width="9" height="9"><use href="#pb"/></svg></div><div class="pl">Border</div><div class="pv"><b>None</b></div></div>
    <div class="pr"><div class="pm"></div><div class="pl">Conditions</div><div class="pv"><b>[No Conditions]</b></div></div>
    <div class="pr"><div class="pm"></div><div class="pl">Component Style</div><div class="pv"><i class="sw"></i></div></div>
    <div class="pr"><div class="pm"></div><div class="pl">Use Parent Styles</div><div class="pv">False</div></div>
    <div class="ph"><div class="pm"><svg width="9" height="9"><use href="#mb"/></svg></div><span>5. Behavior</span></div>
    <div class="pr"><div class="pm"></div><div class="pl">Auto Width</div><div class="pv">False</div></div>
    <div class="pr"><div class="pm"></div><div class="pl">Can Grow</div><div class="pv">False</div></div>
    <div class="pr"><div class="pm"></div><div class="pl">Can Shrink</div><div class="pv">False</div></div>
    <div class="pr"><div class="pm"></div><div class="pl">Grow to Height</div><div class="pv">False</div></div>
    <div class="pr"><div class="pm"></div><div class="pl">Can Break</div><div class="pv">False</div></div>
    <div class="pr"><div class="pm"></div><div class="pl">Dock Style</div><div class="pv">None</div></div>
    <div class="pr"><div class="pm"></div><div class="pl">Enabled</div><div class="pv">True</div></div>
    <div class="pr"><div class="pm"><svg width="9" height="9"><use href="#pb"/></svg></div><div class="pl">Interaction</div><div class="pv"><b>(Interaction)</b></div></div>
    <div class="pr"><div class="pm"></div><div class="pl">Printable</div><div class="pv">True</div></div>
    <div class="pr"><div class="pm"></div><div class="pl">Print on</div><div class="pv">All Pages</div></div>
    <div class="pr"><div class="pm"></div><div class="pl">Shift Mode</div><div class="pv">Increasing Size</div></div>
   </div>
   <div class="psb">
    <div class="sbb" style="height:16px"><i class="up"></i></div>
    <div class="sbt" style="height:505px"></div>
    <div class="flex-grow-1"></div>
    <div class="sbb" style="height:16px"><i class="dn"></i></div>
   </div>
  </div>
  <div class="pend flex-grow-1"></div>
 </div>
</div>
<div class="dlg">
 <div class="dh">Expression Editor<svg width="11" height="11" viewBox="0 0 11 11"><path d="M1 1l9 9M10 1l-9 9" stroke="#5c7fa6" stroke-width="2.200"/></svg></div>
 <div class="d-flex dbd">
  <div class="dtb"><div class="a">Expression</div><div>Data Column</div><div>System Variable</div><div>Summary</div></div>
  <div class="ed"><div><span>&lt;html&gt;&lt;body&gt;</span></div><div><span>&lt;p&gt;&lt;font size="10" face="sans-serif"&gt;A text with font size 10 &lt;/font&gt;&lt;br&gt;</span></div><div><span>&lt;font size="2" face="sans-serif"&gt; A text with font size</span></div><div><span>2&lt;/font&gt;&lt;/body&gt;&lt;/html&gt;</span></div></div>
  <div class="tr">
   <div><svg width="9" height="9"><use href="#pb"/></svg><svg style="margin-left:2px" width="14" height="11" viewBox="0 0 15 11"><rect width="15" height="10" y=".5" fill="#5a6f92"/><rect x="1" y="1.500" width="13" height="8" fill="#dfe6f0"/><text x="4.500" y="8" font-size="7" font-weight="700" fill="#223" text-anchor="middle" font-family="Liberation Sans">Σ</text><text x="10.500" y="8" font-size="7" font-weight="700" fill="#223" text-anchor="middle" font-family="Liberation Sans">#</text></svg>System Variables</div>
   <div><svg width="9" height="9"><use href="#pb"/></svg><span class="text-center" style="width:14px;margin-left:2px;font:italic 700 11px/1 'Liberation Serif',serif">fx</span>Functions</div>
  </div>
 </div>
 <div class="df"><button class="btn dbtn">OK</button><button class="btn dbtn">Cancel</button><svg width="8" height="8" viewBox="0 0 8 8"><path d="M7 1v1M5 3v1M7 3v1M3 5v1M5 5v1M7 5v1M1 7v1M3 7v1M5 7v1M7 7v1" stroke="#6f93bd"/></svg></div>
</div>
<script src="https://cdn.jsdelivr.net/npm/bootstrap@5.3.0/dist/js/bootstrap.bundle.min.js"></script>
</body></html>
